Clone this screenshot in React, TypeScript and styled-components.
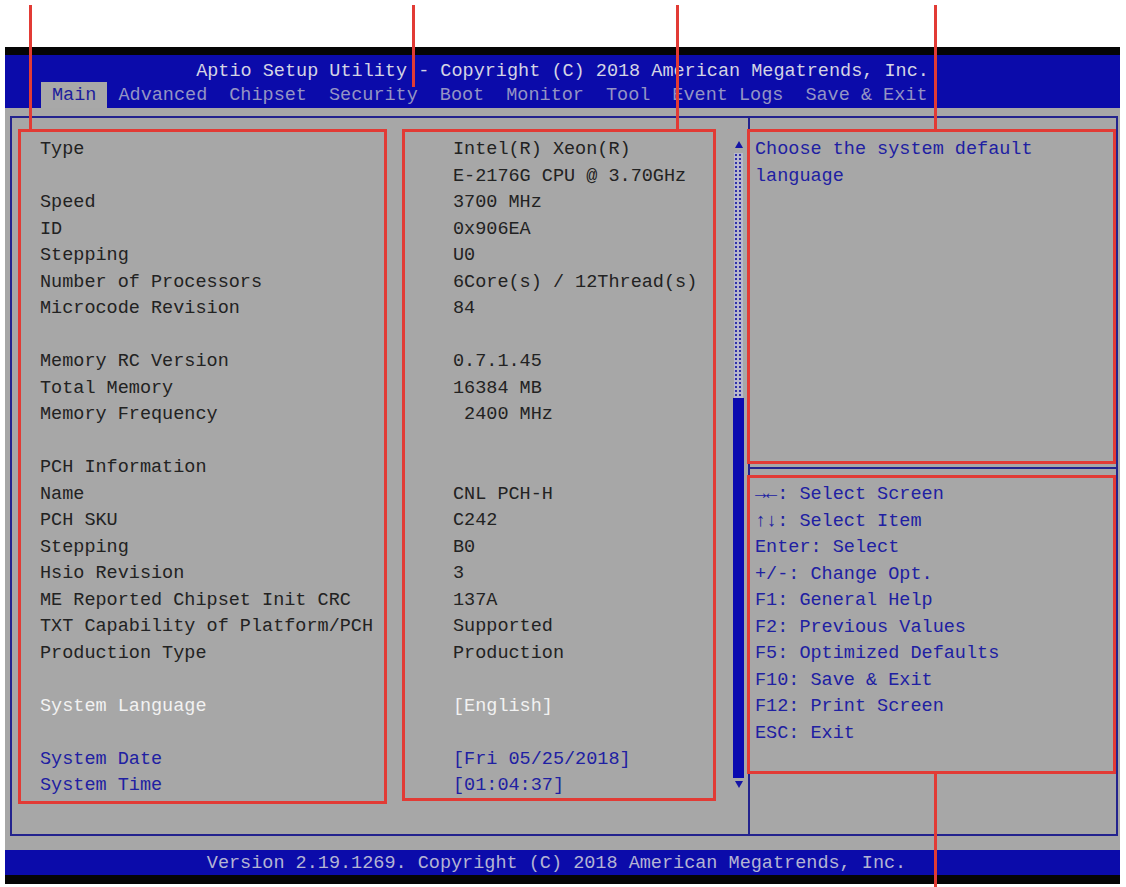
import React from "react";
import styled, { createGlobalStyle } from "styled-components";

const Global = createGlobalStyle`
  html, body { margin: 0; padding: 0; background: #ffffff; }
  #root { width: 1126px; height: 887px; }
`;

const MONO = `"Liberation Mono", "DejaVu Sans Mono", monospace`;

const Page = styled.div`
  position: relative;
  width: 1126px;
  height: 887px;
  overflow: hidden;
  background: #ffffff;
  font-family: ${MONO};
  font-size: 18.5px;
`;

const TopGap = styled.div`
  height: 47px;
`;

const Screen = styled.div`
  margin-left: 5px;
  width: 1115px;
  display: flex;
  flex-direction: column;
`;

const BlackBar = styled.div<{ $h: number }>`
  height: ${(p) => p.$h}px;
  background: #050505;
`;

const Header = styled.div`
  height: 53px;
  background: #0b0baa;
  padding-top: 3px;
  box-sizing: border-box;
  display: flex;
  flex-direction: column;
`;

const Title = styled.div`
  height: 24px;
  line-height: 27px;
  text-align: center;
  color: #d4d4e4;
  white-space: pre;
`;

const Tabs = styled.div`
  height: 26px;
  display: flex;
  align-items: stretch;
  padding-left: 36px;
`;

const Tab = styled.div<{ $active?: boolean }>`
  padding: 0 11px;
  line-height: 28px;
  white-space: pre;
  color: ${(p) => (p.$active ? "#1c1c9c" : "#9494c4")};
  background: ${(p) => (p.$active ? "#a8a8a8" : "transparent")};
`;

const Body = styled.div`
  height: 742px;
  box-sizing: border-box;
  background: #a7a7a7;
  padding: 8px 2px 14px 5px;
  display: flex;
`;

const Frame = styled.div`
  flex: 1;
  border: 2px solid #23238e;
  display: grid;
  grid-template-columns: 736px 1fr;
`;

const MainPane = styled.div`
  display: flex;
`;

const Content = styled.div`
  width: 721px;
  box-sizing: border-box;
  padding: 19px 0 0 28px;
`;

const Row = styled.div`
  display: grid;
  grid-template-columns: 413px 1fr;
  height: 26.5px;
  line-height: 26.5px;
  white-space: pre;
`;

type Tone = "dark" | "white" | "blue";

const toneColor = (t: Tone) =>
  t === "white" ? "#f2f2f2" : t === "blue" ? "#2020a2" : "#222222";

const Cell = styled.span<{ $tone: Tone }>`
  color: ${(p) => toneColor(p.$tone)};
`;

const ScrollBar = styled.div`
  width: 11px;
  margin-right: 4px;
  padding-top: 23px;
  display: flex;
  flex-direction: column;
  align-items: center;
`;

const ArrowUp = styled.div`
  width: 0;
  height: 0;
  border-left: 4px solid transparent;
  border-right: 4px solid transparent;
  border-bottom: 7px solid #1414a6;
  margin-bottom: 5px;
`;

const ArrowDown = styled.div`
  width: 0;
  height: 0;
  border-left: 4px solid transparent;
  border-right: 4px solid transparent;
  border-top: 7px solid #1414a6;
  margin-top: 3px;
`;

const Track = styled.div`
  width: 9px;
  height: 245px;
  background-color: #b8b8cc;
  background-image: radial-gradient(circle, #3030a8 1px, transparent 1.5px);
  background-size: 4px 4px;
`;

const Thumb = styled.div`
  width: 11px;
  height: 380px;
  background: #0a0ab0;
`;

const SidePane = styled.div`
  border-left: 2px solid #23238e;
  display: flex;
  flex-direction: column;
`;

const Desc = styled.div`
  height: 351px;
  box-sizing: border-box;
  padding: 19px 6px 0 5px;
  line-height: 26.5px;
  color: #2020a2;
  border-bottom: 2px solid #23238e;
`;

const Keys = styled.div`
  padding: 13px 0 0 5px;
  display: flex;
  flex-direction: column;
`;

const KeyLine = styled.div`
  height: 26.5px;
  line-height: 26.5px;
  color: #2020a2;
  white-space: pre;
`;

const Footer = styled.div`
  height: 25px;
  line-height: 28px;
  background: #0b0baa;
  color: #b4b4d4;
  text-align: center;
  white-space: pre;
  padding-right: 12px;
`;

const Mark = styled.div<{ $x: number; $y: number; $w: number; $h: number; $box?: boolean }>`
  position: absolute;
  left: ${(p) => p.$x}px;
  top: ${(p) => p.$y}px;
  width: ${(p) => p.$w}px;
  height: ${(p) => p.$h}px;
  box-sizing: border-box;
  ${(p) =>
    p.$box
      ? "border: 3px solid #e23b35;"
      : "background: #e23b35;"}
  pointer-events: none;
`;

type RowData = [string, string, Tone];

const rows: RowData[] = [
  ["Type", "Intel(R) Xeon(R)", "dark"],
  ["", "E-2176G CPU @ 3.70GHz", "dark"],
  ["Speed", "3700 MHz", "dark"],
  ["ID", "0x906EA", "dark"],
  ["Stepping", "U0", "dark"],
  ["Number of Processors", "6Core(s) / 12Thread(s)", "dark"],
  ["Microcode Revision", "84", "dark"],
  ["", "", "dark"],
  ["Memory RC Version", "0.7.1.45", "dark"],
  ["Total Memory", "16384 MB", "dark"],
  ["Memory Frequency", " 2400 MHz", "dark"],
  ["", "", "dark"],
  ["PCH Information", "", "dark"],
  ["Name", "CNL PCH-H", "dark"],
  ["PCH SKU", "C242", "dark"],
  ["Stepping", "B0", "dark"],
  ["Hsio Revision", "3", "dark"],
  ["ME Reported Chipset Init CRC", "137A", "dark"],
  ["TXT Capability of Platform/PCH", "Supported", "dark"],
  ["Production Type", "Production", "dark"],
  ["", "", "dark"],
  ["System Language", "[English]", "white"],
  ["", "", "dark"],
  ["System Date", "[Fri 05/25/2018]", "blue"],
  ["System Time", "[01:04:37]", "blue"],
];

const tabs = ["Main", "Advanced", "Chipset", "Security", "Boot", "Monitor", "Tool", "Event Logs", "Save & Exit"];

const keys = [
  "→←: Select Screen",
  "↑↓: Select Item",
  "Enter: Select",
  "+/-: Change Opt.",
  "F1: General Help",
  "F2: Previous Values",
  "F5: Optimized Defaults",
  "F10: Save & Exit",
  "F12: Print Screen",
  "ESC: Exit",
];

export default function App() {
  return (
    <Page>
      <Global />
      <TopGap />
      <Screen>
        <BlackBar $h={8} />
        <Header>
          <Title>Aptio Setup Utility - Copyright (C) 2018 American Megatrends, Inc.</Title>
          <Tabs>
            {tabs.map((t, i) => (
              <Tab key={t} $active={i === 0}>
                {t}
              </Tab>
            ))}
          </Tabs>
        </Header>
        <Body>
          <Frame>
            <MainPane>
              <Content>
                {rows.map(([label, value, tone], i) => (
                  <Row key={i}>
                    <Cell $tone={tone}>{label}</Cell>
                    <Cell $tone={tone}>{value}</Cell>
                  </Row>
                ))}
              </Content>
              <ScrollBar>
                <ArrowUp />
                <Track />
                <Thumb />
                <ArrowDown />
              </ScrollBar>
            </MainPane>
            <SidePane>
              <Desc>Choose the system default language</Desc>
              <Keys>
                {keys.map((k) => (
                  <KeyLine key={k}>{k}</KeyLine>
                ))}
              </Keys>
            </SidePane>
          </Frame>
        </Body>
        <Footer>Version 2.19.1269. Copyright (C) 2018 American Megatrends, Inc.</Footer>
        <BlackBar $h={9} />
      </Screen>

      <Mark $box $x={18} $y={129} $w={369} $h={675} />
      <Mark $box $x={402} $y={129} $w={314} $h={672} />
      <Mark $box $x={747} $y={129} $w={369} $h={335} />
      <Mark $box $x={747} $y={475} $w={369} $h={299} />
      <Mark $x={29} $y={5} $w={3} $h={125} />
      <Mark $x={412} $y={5} $w={3} $h={82} />
      <Mark $x={676} $y={5} $w={3} $h={125} />
      <Mark $x={934} $y={5} $w={3} $h={125} />
      <Mark $x={934} $y={772} $w={3} $h={115} />
    </Page>
  );
}
